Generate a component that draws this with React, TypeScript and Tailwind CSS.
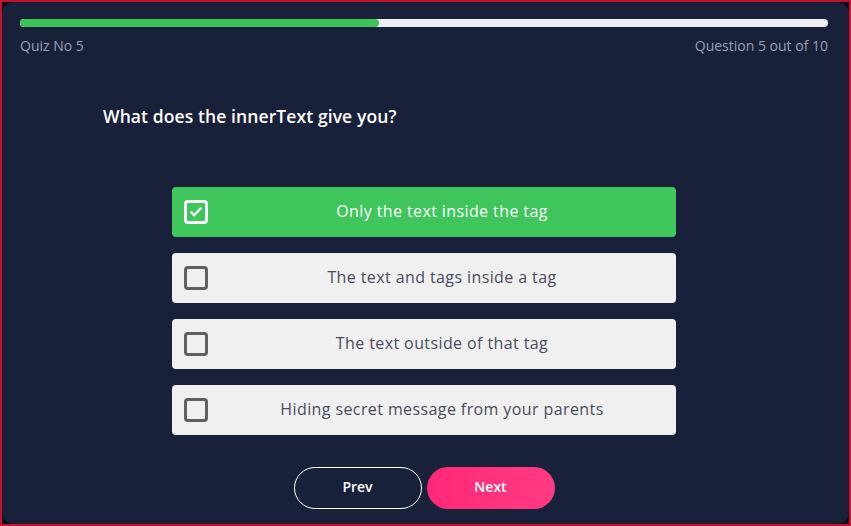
import { useState } from 'react'

const options = [
  'Only the text inside the tag',
  'The text and tags inside a tag',
  'The text outside of that tag',
  'Hiding secret message from your parents',
]

function CheckIcon() {
  return (
    <svg viewBox="0 0 24 24" className="h-[16px] w-[16px]" fill="none" stroke="white" strokeWidth="3.5" strokeLinecap="round" strokeLinejoin="round">
      <path d="M5 12.5l4.5 4.5L19 6.5" />
    </svg>
  )
}

export default function App() {
  const [selected, setSelected] = useState(0)

  return (
    <div
      className="h-[526px] w-[851px] border-2 border-[#c8102e] bg-[#0a0c1e]"
      style={{ fontFamily: '"Open Sans", "Noto Sans", sans-serif' }}
    >
      <div className="flex h-full flex-col rounded-[12px] bg-[#19213a] pl-[18px] pr-[21px] pt-[17px]">
        <div className="h-[8px] w-full rounded-full bg-[#eeeef2]">
          <div className="h-full w-[44.4%] rounded-full bg-[#3dc35a]" />
        </div>
        <div className="mt-[8px] flex justify-between text-[14px] text-[#9a9fb3]">
          <span>Quiz No 5</span>
          <span>Question 5 out of 10</span>
        </div>

        <h1 className="mt-[47px] pl-[83px] text-[17.5px] font-semibold tracking-[0.1px] text-white">
          What does the innerText give you?
        </h1>

        <div className="mx-auto mt-[58px] flex w-[504px] flex-col gap-[16px]">
          {options.map((o, i) => {
            const active = i === selected
            return (
              <button
                key={o}
                onClick={() => setSelected(i)}
                className={
                  'flex h-[50px] items-center rounded-[4px] pl-[12px] text-[16px] tracking-[0.4px] ' +
                  (active ? 'bg-[#3ec55c] text-white' : 'bg-[#f0f0f0] text-[#4a4c5c]')
                }
              >
                <span
                  className={
                    'flex h-[24px] w-[24px] shrink-0 items-center justify-center rounded-[4px] border-[3px] ' +
                    (active ? 'border-white' : 'border-[#5f5f64]')
                  }
                >
                  {active && <CheckIcon />}
                </span>
                <span className="flex-1 pb-[3px] text-center">{o}</span>
              </button>
            )
          })}
        </div>

        <div className="mt-[32px] flex justify-center gap-[5px]">
          <button className="h-[42px] w-[128px] rounded-full border border-white pb-[3px] text-[14px] font-semibold text-white">
            Prev
          </button>
          <button className="h-[42px] w-[128px] rounded-full bg-gradient-to-r from-[#ff2878] to-[#ff3a82] pb-[3px] text-[14px] font-semibold text-white">
            Next
          </button>
        </div>
      </div>
    </div>
  )
}
